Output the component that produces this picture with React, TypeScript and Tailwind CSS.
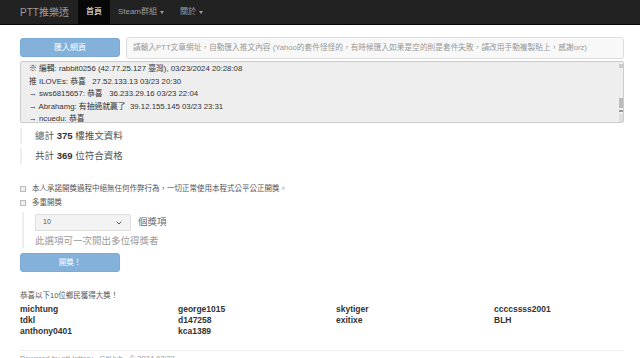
import { ChevronDown } from 'lucide-react';

const FONT = { fontFamily: '"Liberation Sans", "Noto Sans CJK TC", sans-serif' };

const COMMENTS = [
  '※ 編輯: rabbit0256 (42.77.25.127 臺灣), 03/23/2024 20:28:08',
  '推 ILOVEs: 恭喜   27.52.133.13 03/23 20:30',
  '→ sws6815657: 恭喜   36.233.29.16 03/23 22:04',
  '→ Abrahamg: 有抽過就贏了  39.12.155.145 03/23 23:31',
  '→ ncuedu: 恭喜',
];

const WINNERS = [
  'michtung', 'george1015', 'skytiger', 'ccccssss2001',
  'tdkl', 'd147258', 'exitixe', 'BLH',
  'anthony0401', 'kca1389',
];

function Caret() {
  return <span className="ml-[3px] inline-block border-x-[2.5px] border-t-[3px] border-x-transparent border-t-[#9d9d9d] align-middle" />;
}

export default function App() {
  return (
    <div className="h-[358px] w-[640px] overflow-hidden bg-white text-[#333]" style={FONT}>
      <nav className="flex h-[25px] items-center border-b border-[#080808] bg-[#222] pl-[20px]">
        <span className="mr-[9px] text-[10px] text-[#9d9d9d]">PTT推樂透</span>
        <span className="flex h-full items-center bg-[#080808] px-[8px] text-[8px] text-white">首頁</span>
        <span className="flex h-full items-center px-[8px] text-[8px] text-[#9d9d9d]">Steam群組<Caret /></span>
        <span className="flex h-full items-center px-[8px] text-[8px] text-[#9d9d9d]">關於<Caret /></span>
      </nav>

      <div className="w-[624px] pl-[20px] pt-[13px]">
        <div className="flex gap-[6px]">
          <button className="h-[19px] w-[100px] shrink-0 rounded-[3px] border border-[#7aaad5] bg-[#83b1da] text-[8px] text-white">匯入網頁</button>
          <div className="-mt-[1px] flex h-[22px] flex-1 items-center rounded-[3px] border border-[#ddd] bg-[#f8f8f8] px-[6px] text-[7.7px] text-[#999] whitespace-nowrap">
            請輸入PTT文章網址，自動匯入推文內容 (Yahoo的套件怪怪的，有時候匯入如果是空的則是套件失敗，請改用手動複製貼上，感謝orz)
          </div>
        </div>

        <div className="relative mt-[2px] h-[62px] overflow-hidden rounded-[2px] border border-[#ccc] bg-[#eee] px-[8px] pt-[1px] text-[7.8px] leading-[12.5px] text-[#333] whitespace-pre">
          {COMMENTS.map((c, i) => (
            <div key={i}>{c}</div>
          ))}
          <div className="absolute right-[0px] top-[2px] flex h-[58px] w-[4px] flex-col gap-[2px]">
            <div className="h-[4px] bg-[#ccc]" />
            <div className="flex-1" />
            <div className="h-[10px] bg-[#bbb]" />
            <div className="h-[2px] bg-[#999]" />
            <div className="h-[8px] bg-[#ddd]" />
          </div>
        </div>

        <div className="mt-[5px] flex flex-col gap-[4px] text-[9.5px] text-[#555]">
          <div className="flex h-[16px] items-center border-l-[2px] border-[#eee] pl-[13px]">
            總計&nbsp;<b className="text-[#333]">375</b>&nbsp;樓推文資料
          </div>
          <div className="flex h-[16px] items-center border-l-[2px] border-[#eee] pl-[13px]">
            共計&nbsp;<b className="text-[#333]">369</b>&nbsp;位符合資格
          </div>
        </div>

        <div className="mt-[19px] flex flex-col gap-[3px] text-[7.5px] text-[#555]">
          <label className="flex h-[11px] items-center gap-[6px]">
            <span className="h-[6px] w-[6px] border border-[#bbb] bg-[#eee]" />
            本人承諾開獎過程中絕無任何作弊行為，一切正常使用本程式公平公正開獎。
          </label>
          <label className="flex h-[11px] items-center gap-[6px]">
            <span className="h-[6px] w-[6px] border border-[#bbb] bg-[#eee]" />
            多重開獎
          </label>
        </div>

        <div className="ml-[2px] mt-[4px] border-l-[2px] border-[#eee] pb-[1px] pl-[11px] pt-[2px]">
          <div className="flex items-center gap-[7px]">
            <div className="flex h-[17px] w-[96px] items-center justify-between rounded-[2px] border border-[#ddd] bg-[#f3f3f3] px-[7px] text-[7px] text-[#555]">
              10
              <ChevronDown size={8} strokeWidth={3} />
            </div>
            <span className="text-[9.5px] text-[#666]">個獎項</span>
          </div>
          <div className="mt-[3px] text-[9.5px] leading-[13px] text-[#999]">此選項可一次開出多位得獎者</div>
        </div>

        <button className="mt-[2px] h-[19px] w-[100px] rounded-[3px] border border-[#7aaad5] bg-[#83b1da] text-[7.5px] text-white">開獎！</button>

        <div className="mt-[18px] text-[7.5px] text-[#555]">恭喜以下10位鄉民獲得大獎！</div>
        <div className="mt-[3px] grid grid-cols-[158px_158px_158px_158px] text-[8.5px] font-bold leading-[11px] text-[#333]">
          {WINNERS.map((w) => (
            <div key={w}>{w}</div>
          ))}
        </div>

        <div className="mt-[13px] border-t border-[#eee] pt-[2px] text-[7.5px] text-[#999]">
          Powered by ptt-lottery · GitHub · © 2024 03/23
        </div>
      </div>
    </div>
  );
}
